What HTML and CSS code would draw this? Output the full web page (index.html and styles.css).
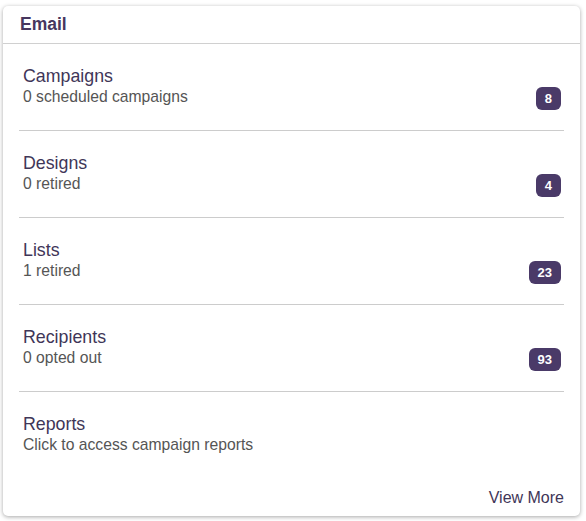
FILE: index.html
```html
<!DOCTYPE html>
<html>
<head>
<meta charset="utf-8">
<link rel="stylesheet" href="styles.css">
</head>
<body>
<div class="card">
  <div class="card-header">Email</div>
  <div class="card-body">
    <div class="row">
      <div class="row-text">
        <div class="row-title">Campaigns</div>
        <div class="row-sub">0 scheduled campaigns</div>
      </div>
      <span class="badge">8</span>
    </div>
    <div class="row">
      <div class="row-text">
        <div class="row-title">Designs</div>
        <div class="row-sub">0 retired</div>
      </div>
      <span class="badge">4</span>
    </div>
    <div class="row">
      <div class="row-text">
        <div class="row-title">Lists</div>
        <div class="row-sub">1 retired</div>
      </div>
      <span class="badge">23</span>
    </div>
    <div class="row">
      <div class="row-text">
        <div class="row-title">Recipients</div>
        <div class="row-sub">0 opted out</div>
      </div>
      <span class="badge">93</span>
    </div>
    <div class="row last">
      <div class="row-text">
        <div class="row-title">Reports</div>
        <div class="row-sub">Click to access campaign reports</div>
      </div>
    </div>
  </div>
  <div class="card-footer"><a class="more">View More</a></div>
</div>
</body>
</html>
```

FILE: styles.css
```css
html, body {
  margin: 0;
  padding: 0;
  background: #ffffff;
}
body {
  font-family: "Liberation Sans", Arial, sans-serif;
  padding: 6px 6px 6px 3px;
}
.card {
  width: 577px;
  height: 510px;
  box-sizing: border-box;
  background: #fff;
  border-radius: 5px;
  box-shadow: 0 1px 4px rgba(0,0,0,0.35);
  display: flex;
  flex-direction: column;
}
.card-header {
  height: 38px;
  box-sizing: border-box;
  padding: 8px 17px 0;
  font-size: 17.5px;
  font-weight: bold;
  color: #47375f;
  border-bottom: 1px solid #d0d0d0;
}
.card-body {
  padding: 0 16px;
}
.row {
  display: flex;
  justify-content: space-between;
  align-items: flex-end;
  padding: 22px 3px 23px 4px;
  border-bottom: 1px solid #cccccc;
}
.row.last {
  border-bottom: none;
}
.row-title {
  font-size: 17.8px;
  line-height: 21px;
  color: #3f3658;
}
.row-sub {
  font-size: 15.7px;
  line-height: 20px;
  color: #555555;
}
.badge {
  display: inline-block;
  height: 23px;
  box-sizing: border-box;
  padding: 0 9px;
  line-height: 23px;
  text-align: center;
  background: #4a3a68;
  color: #fff;
  font-size: 13px;
  font-weight: bold;
  border-radius: 6px;
  margin-bottom: -3px;
}
.card-footer {
  margin-top: auto;
  display: flex;
  justify-content: flex-end;
  padding: 0 16px 9px;
}
.more {
  font-size: 16px;
  color: #3f3658;
}
```
